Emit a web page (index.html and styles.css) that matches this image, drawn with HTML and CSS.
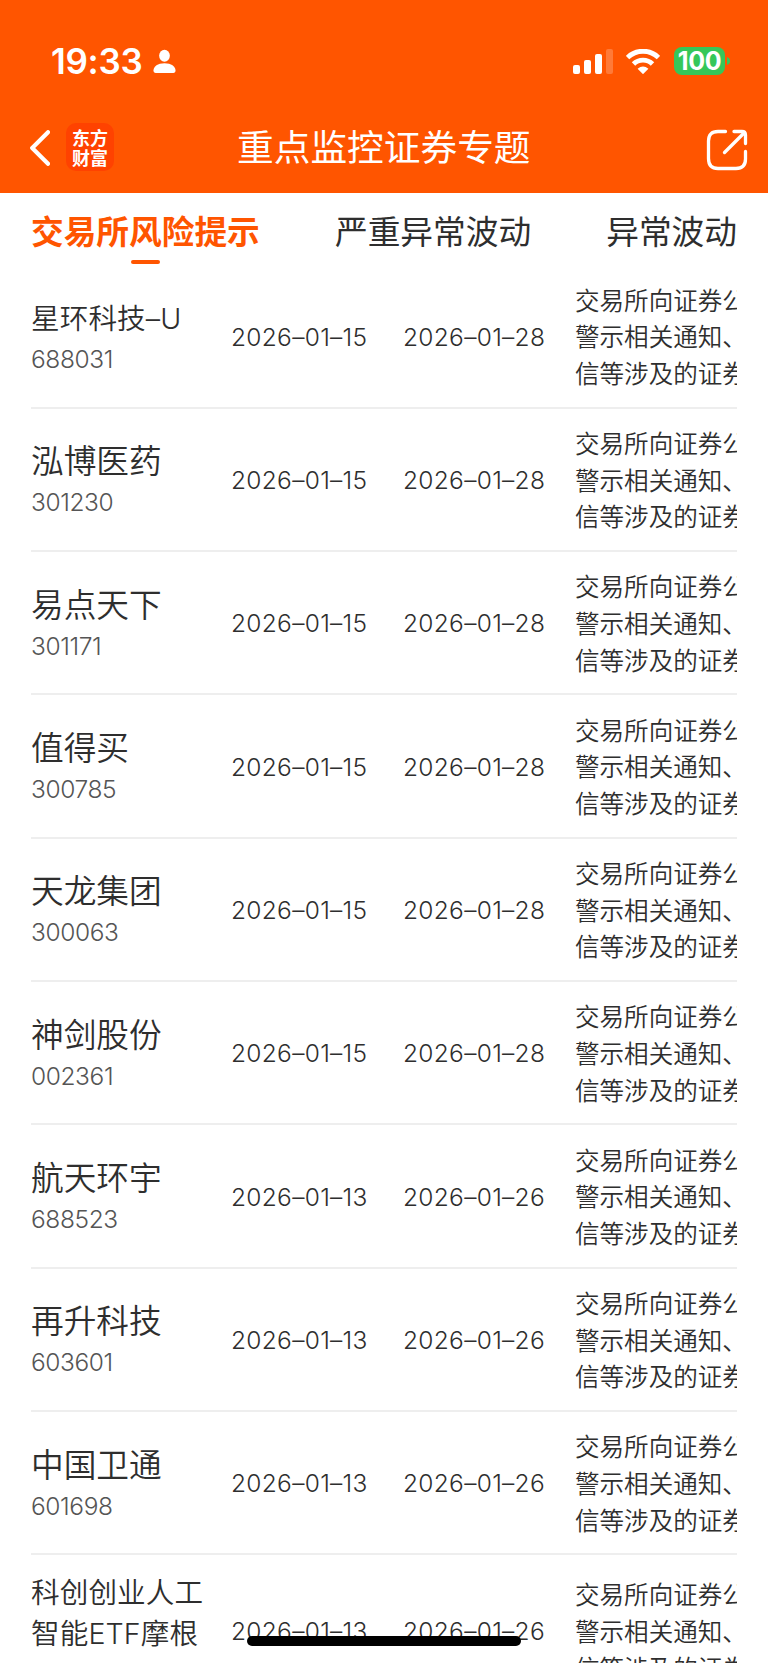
FILE: index.html
```html
<!DOCTYPE html>
<html lang="zh-CN">
<head>
<meta charset="utf-8">
<title>重点监控证券专题</title>
<link rel="stylesheet" href="styles.css">
</head>
<body>
<div class="screen">
  <header class="header">
    <div class="status">
      <span class="time">19:33</span>
      <svg class="person" viewBox="0 0 24 26"><ellipse cx="12" cy="7" rx="5.6" ry="6.3" fill="#fff"/><path d="M.5 22.5C.5 18 5 14.8 12 14.8s11.500 3.200 11.500 7.700c0 1.600-.8 2.500-2.300 2.500H2.800C1.300 25 .5 24.100.5 22.500z" fill="#fff"/></svg>
      <span class="spacer"></span>
      <svg class="signal" viewBox="0 0 40 25"><g fill="#fff"><rect y="16" width="7" height="9" rx="2"/><rect x="11" y="11" width="7" height="14" rx="2"/><rect x="22" y="5" width="7" height="20" rx="2"/><rect x="33" width="7" height="25" rx="2" opacity=".22"/></g></svg>
      <svg class="wifi" viewBox="0 0 34 25"><g fill="none" stroke="#fff" stroke-width="4.900"><path d="M1.500 8.600A22 22 0 0 1 32.500 8.600"/><path d="M7.500 15A13.500 13.500 0 0 1 26.500 15"/></g><path d="M17 25.200L11.600 19.800Q17 15.300 22.400 19.800z" fill="#fff"/></svg>
      <span class="battery">100</span><svg class="cap" viewBox="0 0 3 8"><path d="M0 0Q3 1.200 3 4T0 8z" fill="#35c759"/></svg>
    </div>
    <nav class="nav">
      <svg class="back" viewBox="0 0 20 36"><path d="M18 2.200L2.200 18 18 33.800" fill="none" stroke="#fff" stroke-width="4.200" stroke-linecap="round" stroke-linejoin="round"/></svg>
      <div class="logo"><span>东方</span><span>财富</span></div>
      <h1 class="title">重点监控证券专题</h1>
      <svg class="share" viewBox="0 0 42 42"><g fill="none" stroke="#fff" stroke-width="3.300" stroke-linecap="round" stroke-linejoin="round"><path d="M19.500 2.500H12Q2.500 2.500 2.500 12V29.500Q2.500 39.500 12 39.500H30Q39.500 39.500 39.500 30V22.500"/><path d="M28 2.500H36Q39.500 2.500 39.500 6V14.500"/><path d="M38 4L18.500 23.500"/></g></svg>
    </nav>
  </header>
  <div class="tabs">
    <span class="tab active">交易所风险提示</span><span class="tab">严重异常波动</span><span class="tab">异常波动</span>
  </div>
  <main class="list">
    <div class="row"><div class="stock"><span class="name small">星环科技–U</span><span class="code">688031</span></div><span class="date">2026–01–15</span><span class="date end">2026–01–28</span><p class="desc">交易所向证券公司<br>警示相关通知、电<br>信等涉及的证券及</p></div>
    <div class="row"><div class="stock"><span class="name">泓博医药</span><span class="code">301230</span></div><span class="date">2026–01–15</span><span class="date end">2026–01–28</span><p class="desc">交易所向证券公司<br>警示相关通知、电<br>信等涉及的证券及</p></div>
    <div class="row"><div class="stock"><span class="name">易点天下</span><span class="code">301171</span></div><span class="date">2026–01–15</span><span class="date end">2026–01–28</span><p class="desc">交易所向证券公司<br>警示相关通知、电<br>信等涉及的证券及</p></div>
    <div class="row"><div class="stock"><span class="name">值得买</span><span class="code">300785</span></div><span class="date">2026–01–15</span><span class="date end">2026–01–28</span><p class="desc">交易所向证券公司<br>警示相关通知、电<br>信等涉及的证券及</p></div>
    <div class="row"><div class="stock"><span class="name">天龙集团</span><span class="code">300063</span></div><span class="date">2026–01–15</span><span class="date end">2026–01–28</span><p class="desc">交易所向证券公司<br>警示相关通知、电<br>信等涉及的证券及</p></div>
    <div class="row"><div class="stock"><span class="name">神剑股份</span><span class="code">002361</span></div><span class="date">2026–01–15</span><span class="date end">2026–01–28</span><p class="desc">交易所向证券公司<br>警示相关通知、电<br>信等涉及的证券及</p></div>
    <div class="row"><div class="stock"><span class="name">航天环宇</span><span class="code">688523</span></div><span class="date">2026–01–13</span><span class="date end">2026–01–26</span><p class="desc">交易所向证券公司<br>警示相关通知、电<br>信等涉及的证券及</p></div>
    <div class="row"><div class="stock"><span class="name">再升科技</span><span class="code">603601</span></div><span class="date">2026–01–13</span><span class="date end">2026–01–26</span><p class="desc">交易所向证券公司<br>警示相关通知、电<br>信等涉及的证券及</p></div>
    <div class="row"><div class="stock"><span class="name">中国卫通</span><span class="code">601698</span></div><span class="date">2026–01–13</span><span class="date end">2026–01–26</span><p class="desc">交易所向证券公司<br>警示相关通知、电<br>信等涉及的证券及</p></div>
    <div class="row last"><div class="stock"><span class="name small">科创创业人工<br>智能ETF摩根</span></div><span class="date">2026–01–13</span><span class="date end">2026–01–26</span><p class="desc">交易所向证券公司<br>警示相关通知、电<br>信等涉及的证券及</p></div>
  </main>
  <div class="home"></div>
</div>
</body>
</html>
```
FILE: styles.css
```css
* { box-sizing: border-box; margin: 0; padding: 0; }
body { background: #fff; }
.screen {
  position: relative; width: 768px; height: 1663px; overflow: hidden;
  background: #fff; color: #2e2e2e;
  font-family: Inter, "Noto Sans CJK SC", sans-serif; font-weight: 350; white-space: nowrap;
}
svg { display: block; flex: none; }
.header { height: 192.500px; background: #ff5500; color: #fff; }
.status { display: flex; align-items: center; height: 122px; padding: 0 39px 0 51px; }
.time { width: 102px; font-size: 35px; font-weight: 570; letter-spacing: -.3px; }
.person { width: 23px; height: 25px; }
.spacer { flex: 1; }
.signal { width: 40px; height: 25px; margin-right: 13px; }
.wifi { width: 34px; height: 25px; margin-right: 14px; }
.battery {
  width: 51px; height: 28px; border-radius: 8px; background: #35c759;
  font: 700 25px/28px Inter, sans-serif; text-align: center; letter-spacing: -.3px;
}
.cap { width: 3px; height: 8px; margin-left: 2px; margin-right: -1px; }
.nav {
  display: grid; grid-template-columns: 20px 49px 1fr 42px; align-items: center;
  height: 50px; padding: 0 20px 0 30px;
}
.back { width: 20px; height: 36px; margin-top: 2px; }
.logo {
  display: flex; flex-direction: column; justify-content: center;
  width: 48px; height: 48px; margin-left: 16px; border-radius: 10px; background: #ff4200;
  font: 700 18px/20px "Noto Sans CJK SC", sans-serif; text-align: center;
}
.title {
  margin-left: 138px; margin-top: -5px; font: 400 36.700px/50px "Noto Sans CJK SC", sans-serif;
}
.share { width: 42px; height: 42px; margin-top: 5px; }
.tabs {
  display: flex; justify-content: space-between; height: 73px; padding: 13px 31px 0;
  font: 400 32.700px/48px "Noto Sans CJK SC", sans-serif;
}
.tab.active { position: relative; color: #ff5500; font-weight: 700; }
.tab.active::after {
  content: ""; position: absolute; left: 100px; top: 54px;
  width: 29px; height: 4px; border-radius: 2px; background: #ff5500;
}
.row {
  display: grid; grid-template-columns: 200px 172px 172px 162px; align-items: center;
  height: 143.330px; margin: 0 31px; border-bottom: 2px solid #eee;
}
.stock { display: flex; flex-direction: column; padding-top: 4px; }
.name { font-size: 32.700px; line-height: 42px; }
.name.small { font-size: 28.600px; line-height: 41px; letter-spacing: .1px; }
.code { font-size: 24.500px; line-height: 40px; font-weight: 300; color: #555; letter-spacing: -.4px; }
.date { font-size: 24.500px; line-height: 36px; padding-top: 1px; letter-spacing: .3px; }
.desc {
  width: 162px; overflow: hidden; padding-top: 1px;
  font: 350 24.550px/36.750px "Noto Sans CJK SC", sans-serif;
}
.last { height: 152px; border: 0; }
.last .stock { padding: 0 0 36px; }
.last .date { padding: 0; }
.last .desc { padding: 0; }
.home {
  position: absolute; left: 247px; top: 1636px;
  width: 274px; height: 10px; border-radius: 5px; background: #000;
}
```
